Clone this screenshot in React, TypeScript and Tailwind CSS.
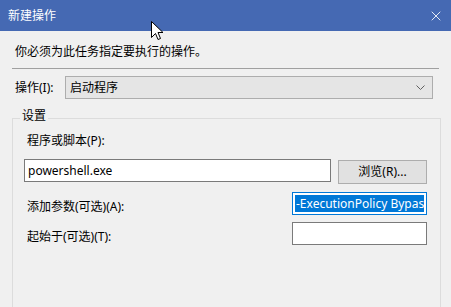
import { X } from "lucide-react";

function Cursor() {
  return (
    <svg
      className="absolute left-[151px] top-[21px]"
      width="13"
      height="20"
      viewBox="0 0 13 20"
    >
      <path
        d="M0.5 0.5 L0.5 16.5 L4.5 12.5 L7 18.5 L9.5 17.5 L7 11.5 L12 11.5 Z"
        fill="#fff"
        stroke="#000"
        strokeWidth="1"
        strokeLinejoin="miter"
      />
    </svg>
  );
}

export default function App() {
  return (
    <div className="relative w-[451px] h-[307px] overflow-hidden bg-[#f0f0f0] text-[12px] leading-[16px] text-black font-['Noto_Sans','Noto_Sans_CJK_SC',sans-serif]">
      {/* title bar */}
      <div className="h-[31px] bg-[#4569b3] flex items-center justify-between pl-[8px] pr-[7px]">
        <span className="text-white">新建操作</span>
        <X className="text-white" size={16} strokeWidth={1.3} />
      </div>

      <p className="mt-[13px] pl-[15px]">你必须为此任务指定要执行的操作。</p>
      <div className="mt-[8px] mx-[12px] h-px bg-[#a0a0a0]" />

      {/* action select */}
      <div className="mt-[7px] flex items-center pl-[15px]">
        <span className="w-[50px]">操作(I):</span>
        <div className="w-[368px] h-[23px] bg-[#e5e5e5] border border-[#adadad] flex items-center justify-between pl-[4px] pr-[7px]">
          <span>启动程序</span>
          <svg width="9" height="5" viewBox="0 0 9 5">
            <path d="M0.5 0.5 L4.5 4.5 L8.5 0.5" fill="none" stroke="#606060" strokeWidth="1" />
          </svg>
        </div>
      </div>

      {/* settings group */}
      <div className="relative mt-[19px] ml-[12px] w-[429px] h-[200px] border border-[#dcdcdc] pl-[11px]">
        <span className="absolute left-[7px] -top-[11px] px-[2px] bg-[#f0f0f0]">设置</span>

        <div className="mt-[14px] ml-[3px]">程序或脚本(P):</div>

        <div className="mt-[10px] flex items-start">
          <div className="w-[307px] h-[23px] bg-white border border-[#7a7a7a] flex items-center pl-[3px]">
            powershell.exe
          </div>
          <button className="ml-[7px] mt-[1px] w-[89px] h-[24px] bg-[#e1e1e1] border border-[#adadad] flex items-center justify-center">
            浏览(R)...
          </button>
        </div>

        <div className="mt-[8px] flex items-start">
          <span className="ml-[3px] mt-[7px] w-[265px]">添加参数(可选)(A):</span>
          <div className="w-[135px] h-[23px] bg-white border border-[#0078d7] p-[2px]">
            <div className="h-full bg-[#0078d7] text-white whitespace-nowrap overflow-hidden pl-[1px] leading-[17px]">
              -ExecutionPolicy Bypass -File
            </div>
          </div>
        </div>

        <div className="mt-[7px] flex items-start">
          <span className="ml-[3px] mt-[7px] w-[265px]">起始于(可选)(T):</span>
          <div className="w-[135px] h-[23px] bg-white border border-[#7a7a7a]" />
        </div>
      </div>

      <Cursor />
    </div>
  );
}
